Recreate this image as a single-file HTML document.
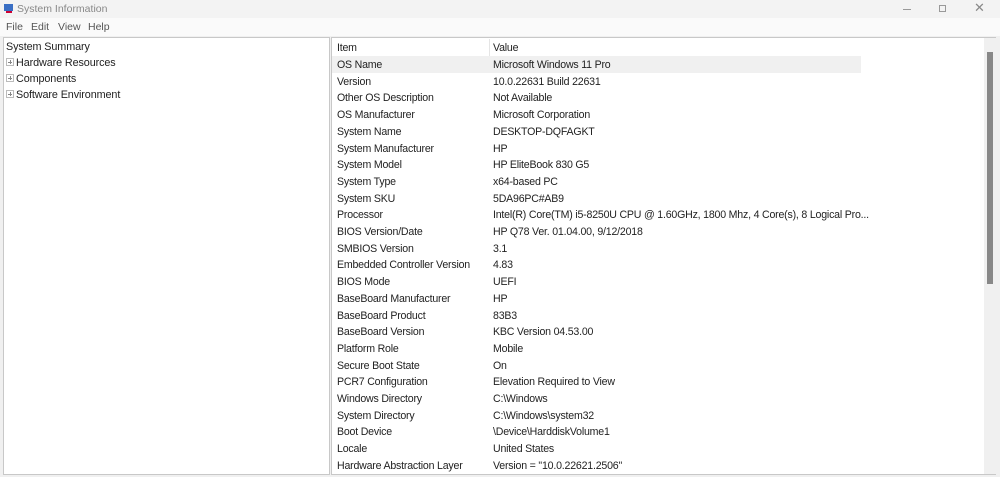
<!DOCTYPE html>
<html><head><style>
*{margin:0;padding:0;box-sizing:border-box}
body{width:1000px;height:477px;background:#f0f0f0;font-family:"Liberation Sans",sans-serif;font-size:10.5px;color:#222;position:relative;overflow:hidden}
.title{position:absolute;left:0;top:0;width:1000px;height:18px;background:#f3f3f3;color:#888}
.title span{position:absolute;left:17px;top:3px;font-size:10.5px}
.menu{position:absolute;left:0;top:18px;width:1000px;height:18px;background:#fafafa;color:#555}
.menu span{position:absolute;top:3px}
.lp{position:absolute;left:3px;top:37px;width:327px;height:438px;background:#fff;border:1px solid #c8c8c8}
.lp div{position:absolute;left:2px;white-space:nowrap;font-size:10.8px;letter-spacing:-0.1px}
.plus{display:inline-block;width:8px;height:8px;border:1px solid #bbb;position:relative;margin-right:2px;vertical-align:0}
.plus:before{content:"";position:absolute;left:1px;top:2.5px;width:4px;height:1px;background:#888}
.plus:after{content:"";position:absolute;left:2.5px;top:1px;width:1px;height:4px;background:#888}
.rp{position:absolute;left:331px;top:37px;width:665px;height:438px;background:#fff;border:1px solid #c8c8c8}
.row{position:absolute;left:0;width:529px;height:16.7px}
.row span{position:absolute;top:3px;white-space:nowrap;font-size:10.6px;letter-spacing:-0.2px}
.a{left:5px}.b{left:161px}
.sb{position:absolute;left:652px;top:0;width:12px;height:436px;background:#f0f0f0}
.th{position:absolute;left:3px;top:14px;width:6px;height:232px;background:#888}
</style></head><body>
<div class="title">
<svg style="position:absolute;left:3px;top:3px" width="11" height="11"><rect x="1" y="1" width="9" height="7" fill="#3a6fc4"/><rect x="3" y="8" width="6" height="2" fill="#c03"/></svg>
<span>System Information</span>
<div style="position:absolute;left:903px;top:9px;width:8px;height:1px;background:#999"></div>
<div style="position:absolute;left:939px;top:5px;width:7px;height:7px;border:1px solid #999"></div>
<span style="left:974px;top:0;font-size:13px;color:#888">✕</span>
</div>
<div class="menu"><span style="left:6px">File</span><span style="left:31px">Edit</span><span style="left:58px">View</span><span style="left:88px">Help</span></div>
<div class="lp">
<div style="top:3px">System Summary</div>
<div style="top:19px"><i class="plus"></i>Hardware Resources</div>
<div style="top:35px"><i class="plus"></i>Components</div>
<div style="top:51px"><i class="plus"></i>Software Environment</div>
</div>
<div class="rp">
<div class="row" style="top:1px;height:17px"><span class="a">Item</span><span class="b">Value</span><div style="position:absolute;left:157px;top:0;width:1px;height:17px;background:#e5e5e5"></div></div>
<div class="row" style="top:18px;background:#f0f0f0"><span class="a">OS Name</span><span class="b">Microsoft Windows 11 Pro</span></div>
<div class="row" style="top:34.7px"><span class="a">Version</span><span class="b">10.0.22631 Build 22631</span></div>
<div class="row" style="top:51.4px"><span class="a">Other OS Description</span><span class="b">Not Available</span></div>
<div class="row" style="top:68.1px"><span class="a">OS Manufacturer</span><span class="b">Microsoft Corporation</span></div>
<div class="row" style="top:84.8px"><span class="a">System Name</span><span class="b">DESKTOP-DQFAGKT</span></div>
<div class="row" style="top:101.5px"><span class="a">System Manufacturer</span><span class="b">HP</span></div>
<div class="row" style="top:118.2px"><span class="a">System Model</span><span class="b">HP EliteBook 830 G5</span></div>
<div class="row" style="top:134.9px"><span class="a">System Type</span><span class="b">x64-based PC</span></div>
<div class="row" style="top:151.6px"><span class="a">System SKU</span><span class="b">5DA96PC#AB9</span></div>
<div class="row" style="top:168.3px"><span class="a">Processor</span><span class="b">Intel(R) Core(TM) i5-8250U CPU @ 1.60GHz, 1800 Mhz, 4 Core(s), 8 Logical Pro...</span></div>
<div class="row" style="top:185px"><span class="a">BIOS Version/Date</span><span class="b">HP Q78 Ver. 01.04.00, 9/12/2018</span></div>
<div class="row" style="top:201.7px"><span class="a">SMBIOS Version</span><span class="b">3.1</span></div>
<div class="row" style="top:218.4px"><span class="a">Embedded Controller Version</span><span class="b">4.83</span></div>
<div class="row" style="top:235.1px"><span class="a">BIOS Mode</span><span class="b">UEFI</span></div>
<div class="row" style="top:251.8px"><span class="a">BaseBoard Manufacturer</span><span class="b">HP</span></div>
<div class="row" style="top:268.5px"><span class="a">BaseBoard Product</span><span class="b">83B3</span></div>
<div class="row" style="top:285.2px"><span class="a">BaseBoard Version</span><span class="b">KBC Version 04.53.00</span></div>
<div class="row" style="top:301.9px"><span class="a">Platform Role</span><span class="b">Mobile</span></div>
<div class="row" style="top:318.6px"><span class="a">Secure Boot State</span><span class="b">On</span></div>
<div class="row" style="top:335.3px"><span class="a">PCR7 Configuration</span><span class="b">Elevation Required to View</span></div>
<div class="row" style="top:352px"><span class="a">Windows Directory</span><span class="b">C:\Windows</span></div>
<div class="row" style="top:368.7px"><span class="a">System Directory</span><span class="b">C:\Windows\system32</span></div>
<div class="row" style="top:385.4px"><span class="a">Boot Device</span><span class="b">\Device\HarddiskVolume1</span></div>
<div class="row" style="top:402.1px"><span class="a">Locale</span><span class="b">United States</span></div>
<div class="row" style="top:418.8px"><span class="a">Hardware Abstraction Layer</span><span class="b">Version = "10.0.22621.2506"</span></div>
<div class="sb"><div class="th"></div></div>
</div>
</body></html>
